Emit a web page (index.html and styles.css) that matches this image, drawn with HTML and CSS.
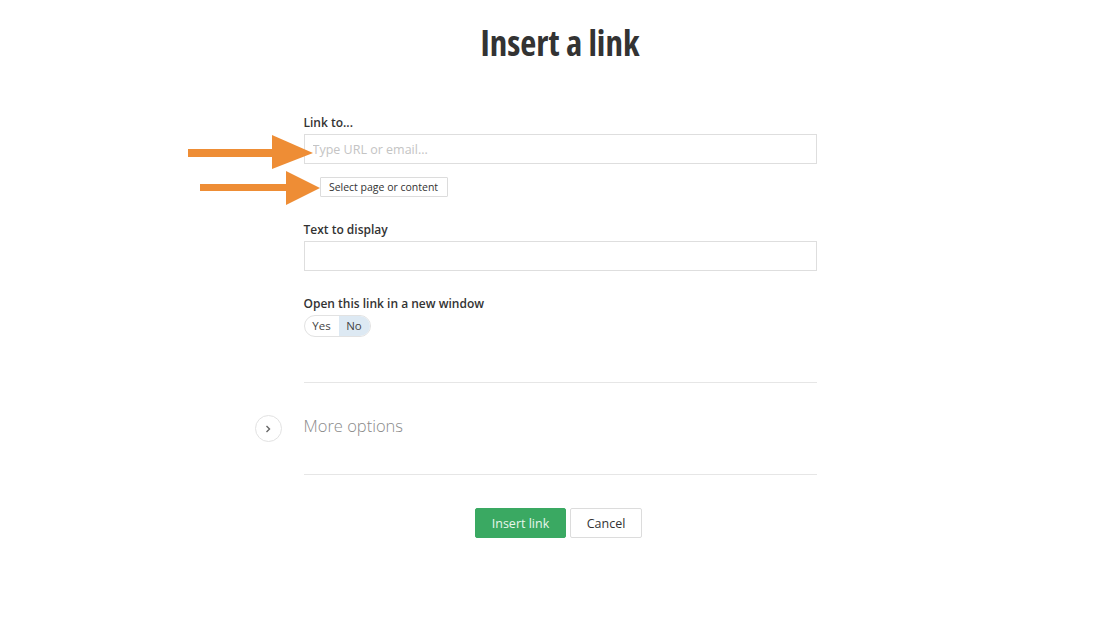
FILE: index.html
```html
<!DOCTYPE html>
<html>
<head>
<meta charset="utf-8">
<link rel="stylesheet" href="styles.css">
</head>
<body>
<div class="page">
  <h1 class="title">Insert a link</h1>
  <form class="form">
    <div class="field">
      <label class="label">Link to...</label>
      <input class="input" type="text" placeholder="Type URL or email...">
      <button type="button" class="select-btn">Select page or content</button>
    </div>
    <div class="field">
      <label class="label">Text to display</label>
      <input class="input" type="text">
    </div>
    <div class="field">
      <label class="label">Open this link in a new window</label>
      <div class="toggle">
        <span class="toggle-opt">Yes</span>
        <span class="toggle-opt active">No</span>
      </div>
    </div>
    <div class="more">
      <span class="more-icon">
        <svg width="10" height="10" viewBox="0 0 10 10"><path d="M3.5 2 L6.5 5 L3.5 8" fill="none" stroke="#666" stroke-width="1.4"/></svg>
      </span>
      <span class="more-text">More options</span>
    </div>
    <div class="actions">
      <button type="button" class="btn btn-primary">Insert link</button>
      <button type="button" class="btn btn-default">Cancel</button>
    </div>
  </form>
  <svg class="arrows" width="140" height="80" viewBox="0 0 140 80">
    <rect x="8" y="24" width="86" height="8" fill="#ee8d35"/>
    <polygon points="92,10 133,28 92,44" fill="#ee8d35"/>
    <rect x="20" y="59" width="88" height="7" fill="#ee8d35"/>
    <polygon points="106,46 140,63 106,80" fill="#ee8d35"/>
  </svg>
</div>
</body>
</html>
```

FILE: styles.css
```css
* { box-sizing: border-box; }
html, body { margin: 0; padding: 0; background: #fff; }
body {
  font-family: "Open Sans", "Liberation Sans", sans-serif;
  color: #333;
  width: 1120px;
  height: 626px;
  overflow: hidden;
}
.page { position: relative; padding-top: 19px; }
.title {
  margin: 0;
  text-align: center;
  font-size: 35px;
  line-height: 48px;
  font-weight: 700;
  font-stretch: 75%;
  color: #333;
}
.form {
  width: 513px;
  margin: 47px auto 0;
  display: flex;
  flex-direction: column;
}
.field { display: flex; flex-direction: column; align-items: flex-start; margin-bottom: 24px; }
.label {
  font-size: 12px;
  line-height: 18px;
  font-weight: 600;
  color: #333;
  margin-bottom: 2px;
}
.input {
  width: 513px;
  height: 30px;
  border: 1px solid #dedede;
  border-radius: 0;
  padding: 0 8px;
  font-family: inherit;
  font-size: 12.5px;
  color: #333;
  outline: none;
}
.input::placeholder { color: #c4c4c4; }
.select-btn {
  margin: 13px 0 0 16px;
  width: 128px;
  height: 20px;
  padding: 0 0 1px;
  border: 1px solid #dcdcdc;
  border-radius: 1px;
  background: #fff;
  font-family: inherit;
  font-size: 10.5px;
  color: #333;
}
.toggle {
  display: flex;
  height: 22px;
  border: 1px solid #e2e2e2;
  border-radius: 11px;
  overflow: hidden;
  margin-top: 0;
}
.toggle-opt {
  font-size: 11.5px;
  line-height: 20px;
  color: #444;
  text-align: center;
}
.toggle-opt:first-child { width: 34px; }
.toggle-opt.active { width: 31px; background: #dde9f3; }
.more {
  margin-top: 21px;
  border-top: 1px solid #e6e6e6;
  border-bottom: 1px solid #e6e6e6;
  height: 93px;
  display: flex;
  align-items: center;
  position: relative;
}
.more-icon {
  position: absolute;
  left: -49px;
  top: 32px;
  width: 27px;
  height: 27px;
  border: 1px solid #e2e2e2;
  border-radius: 50%;
  display: flex;
  align-items: center;
  justify-content: center;
}
.more-text {
  font-size: 16.5px;
  font-weight: 300;
  color: #8a8a8a;
  margin-top: -6px;
}
.actions {
  display: flex;
  justify-content: center;
  gap: 4px;
  margin-top: 33px;
  padding-right: 3px;
}
.btn {
  height: 30px;
  font-family: inherit;
  font-size: 12.5px;
  border-radius: 2px;
  padding: 0;
}
.btn-primary {
  width: 91px;
  background: #3aa962;
  border: 1px solid #3aa962;
  color: #e8f6ec;
}
.btn-default {
  width: 72px;
  background: #fff;
  border: 1px solid #dcdcdc;
  color: #333;
}
.arrows {
  position: absolute;
  left: 180px;
  top: 125px;
}
```
